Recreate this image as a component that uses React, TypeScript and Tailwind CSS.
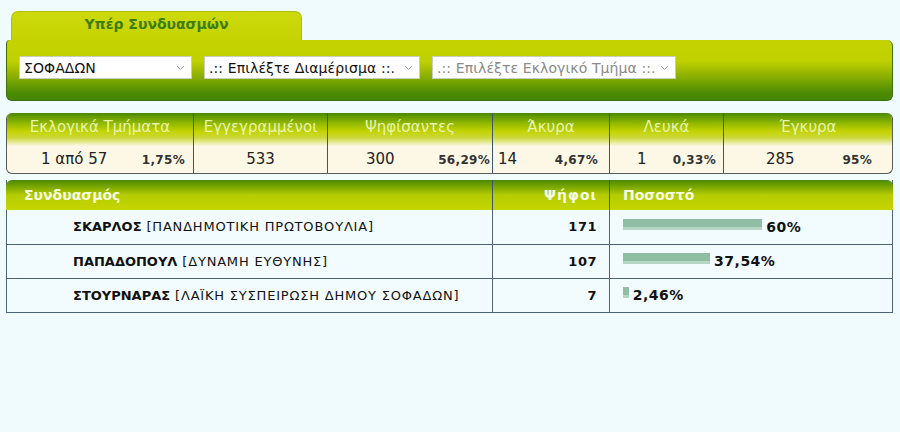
import React from 'react';

const font = { fontFamily: '"DejaVu Sans", Verdana, sans-serif' };

interface SelectProps {
    label: string;
    width: string;
    disabled?: boolean;
}

function Dropdown({ label, width, disabled = false }: SelectProps) {
    return (
        <div className={`relative h-[23px] ${width} bg-white border border-[#c9cfc0] flex items-center`}>
            <span className={`pl-[4px] text-[14px] tracking-[0.1px] leading-none ${disabled ? 'text-[#8a8a8a]' : 'text-[#111]'}`}>{label}</span>
            <svg className="absolute right-[6px] top-[8px]" width="9" height="6" viewBox="0 0 9 6" fill="none">
                <path d="M1 1l3.5 3.5L8 1" stroke="#9a9a9a" strokeWidth="1" />
            </svg>
        </div>
    );
}

const stats = [
    { title: 'Εκλογικά Τμήματα', value: '1 από 57', pct: '1,75%', w: 'w-[187px]', pad: 'pl-[34px] pr-[8px] justify-between' },
    { title: 'Εγγεγραμμένοι', value: '533', pct: '', w: 'w-[134px]', pad: 'justify-center' },
    { title: 'Ψηφίσαντες', value: '300', pct: '56,29%', w: 'w-[165px]', pad: 'pl-[38px] pr-[2px] justify-between' },
    { title: 'Άκυρα', value: '14', pct: '4,67%', w: 'w-[117px]', pad: 'pl-[5px] pr-[11px] justify-between' },
    { title: 'Λευκά', value: '1', pct: '0,33%', w: 'w-[114px]', pad: 'pl-[27px] pr-[7px] justify-between' },
    { title: 'Έγκυρα', value: '285', pct: '95%', w: 'flex-1', pad: 'pl-[42px] pr-[20px] justify-between' },
];

const results = [
    { name: 'ΣΚΑΡΛΟΣ', party: '[ΠΑΝΔΗΜΟΤΙΚΗ ΠΡΩΤΟΒΟΥΛΙΑ]', votes: 171, pct: 60, label: '60%' },
    { name: 'ΠΑΠΑΔΟΠΟΥΛ', party: '[ΔΥΝΑΜΗ ΕΥΘΥΝΗΣ]', votes: 107, pct: 37.54, label: '37,54%' },
    { name: 'ΣΤΟΥΡΝΑΡΑΣ', party: '[ΛΑΪΚΗ ΣΥΣΠΕΙΡΩΣΗ ΔΗΜΟΥ ΣΟΦΑΔΩΝ]', votes: 7, pct: 2.46, label: '2,46%' },
];

export default function App() {
    return (
        <div className="w-[900px] h-[432px] bg-[#effbfd] overflow-hidden" style={font}>
            <div className="pl-[6px] pr-[7px] pt-[11px]">
                {/* tab */}
                <div className="ml-[5px] w-[291px] h-[31px] rounded-t-[7px] bg-gradient-to-b from-[#ccd90c] to-[#c4d300] border-t border-x border-[#b3c000] flex items-center justify-center">
                    <span className="text-[14px] font-bold text-[#3d7c10] -mt-[6px]">Υπέρ Συνδυασμών</span>
                </div>

                {/* filter panel */}
                <div className="-mt-[2px] h-[61px] rounded-[6px] rounded-tl-[4px] border border-t-0 border-[#3c6d12] bg-[linear-gradient(to_bottom,#c4d300_0%,#c0d000_35%,#8cb000_60%,#4c8c04_88%,#468600_100%)] flex items-start pl-[12px] pt-[16px]">
                    <Dropdown label="ΣΟΦΑΔΩΝ" width="w-[173px]" />
                    <div className="w-[12px]" />
                    <Dropdown label=".:: Επιλέξτε Διαμέρισμα ::." width="w-[216px]" />
                    <div className="w-[12px]" />
                    <Dropdown label=".:: Επιλέξτε Εκλογικό Τμήμα ::." width="w-[244px]" disabled />
                </div>

                {/* stats */}
                <div className="mt-[12px] h-[61px] rounded-[6px] border border-[#5b5b5b] border-t-0 overflow-hidden flex bg-[#fdf8e6]">
                    {stats.map((s, i) => (
                        <div key={i} className={`${s.w} flex flex-col ${i < stats.length - 1 ? 'border-r border-[#3b5573]' : ''}`}>
                            <div className="h-[33px] bg-[linear-gradient(to_bottom,#4a8902_0%,#8fb600_30%,#c3d300_55%,#cbd83a_75%,#fdf8e6_100%)] flex items-center justify-center pb-[5px]">
                                <span className="text-[15px] text-[#e6f4b4]">{s.title}</span>
                            </div>
                            <div className={`h-[27px] flex items-center ${s.pad}`}>
                                <span className="text-[15px] text-[#222]">{s.value}</span>
                                {s.pct && <span className="text-[12px] tracking-[0.3px] font-bold text-[#333]">{s.pct}</span>}
                            </div>
                        </div>
                    ))}
                </div>

                {/* results */}
                <div className="mt-[6px] border-x border-b border-[#4d6379]">
                    <div className="h-[30px] rounded-t-[6px] -mx-px bg-gradient-to-b from-[#4a8902] via-[#b4cc00] to-[#c6d500] flex items-center text-[14px] font-bold text-[#f4fbe0]">
                        <div className="w-[487px] pl-[18px] border-r border-[#3b5573] h-full flex items-center">Συνδυασμός</div>
                        <div className="w-[117px] pr-[12px] border-r border-[#3b5573] h-full flex items-center justify-end tracking-[1px]">Ψήφοι</div>
                        <div className="flex-1 pl-[13px]">Ποσοστό</div>
                    </div>
                    {results.map((r, i) => (
                        <div key={i} className={`flex bg-[#f2fbfd] text-[#111] ${i === 0 ? 'h-[34px]' : 'h-[34px] border-t border-[#4d6379]'}`}>
                            <div className="w-[486px] pl-[66px] border-r border-[#4d6379] flex items-center">
                                <span className="text-[13px] font-bold">{r.name}</span>
                                <span className="text-[13px] tracking-[0.8px]">&nbsp;{r.party}</span>
                            </div>
                            <div className="w-[117px] pr-[12px] border-r border-[#4d6379] flex items-center justify-end text-[13px] tracking-[0.5px] font-bold">{r.votes}</div>
                            <div className="flex-1 pl-[13px] flex items-center gap-[4px] text-[14px] tracking-[0.5px] font-bold">
                                <div className="h-[11px] -mt-[6px] flex flex-col" style={{ width: `${Math.max(r.pct * 2.32, 5)}px` }}>
                                    <div className="flex-1 bg-[#8fbea5]" />
                                    <div className="h-[3px] bg-[#b5d6c4]" />
                                </div>
                                <span>{r.label}</span>
                            </div>
                        </div>
                    ))}
                </div>
            </div>
        </div>
    );
}
